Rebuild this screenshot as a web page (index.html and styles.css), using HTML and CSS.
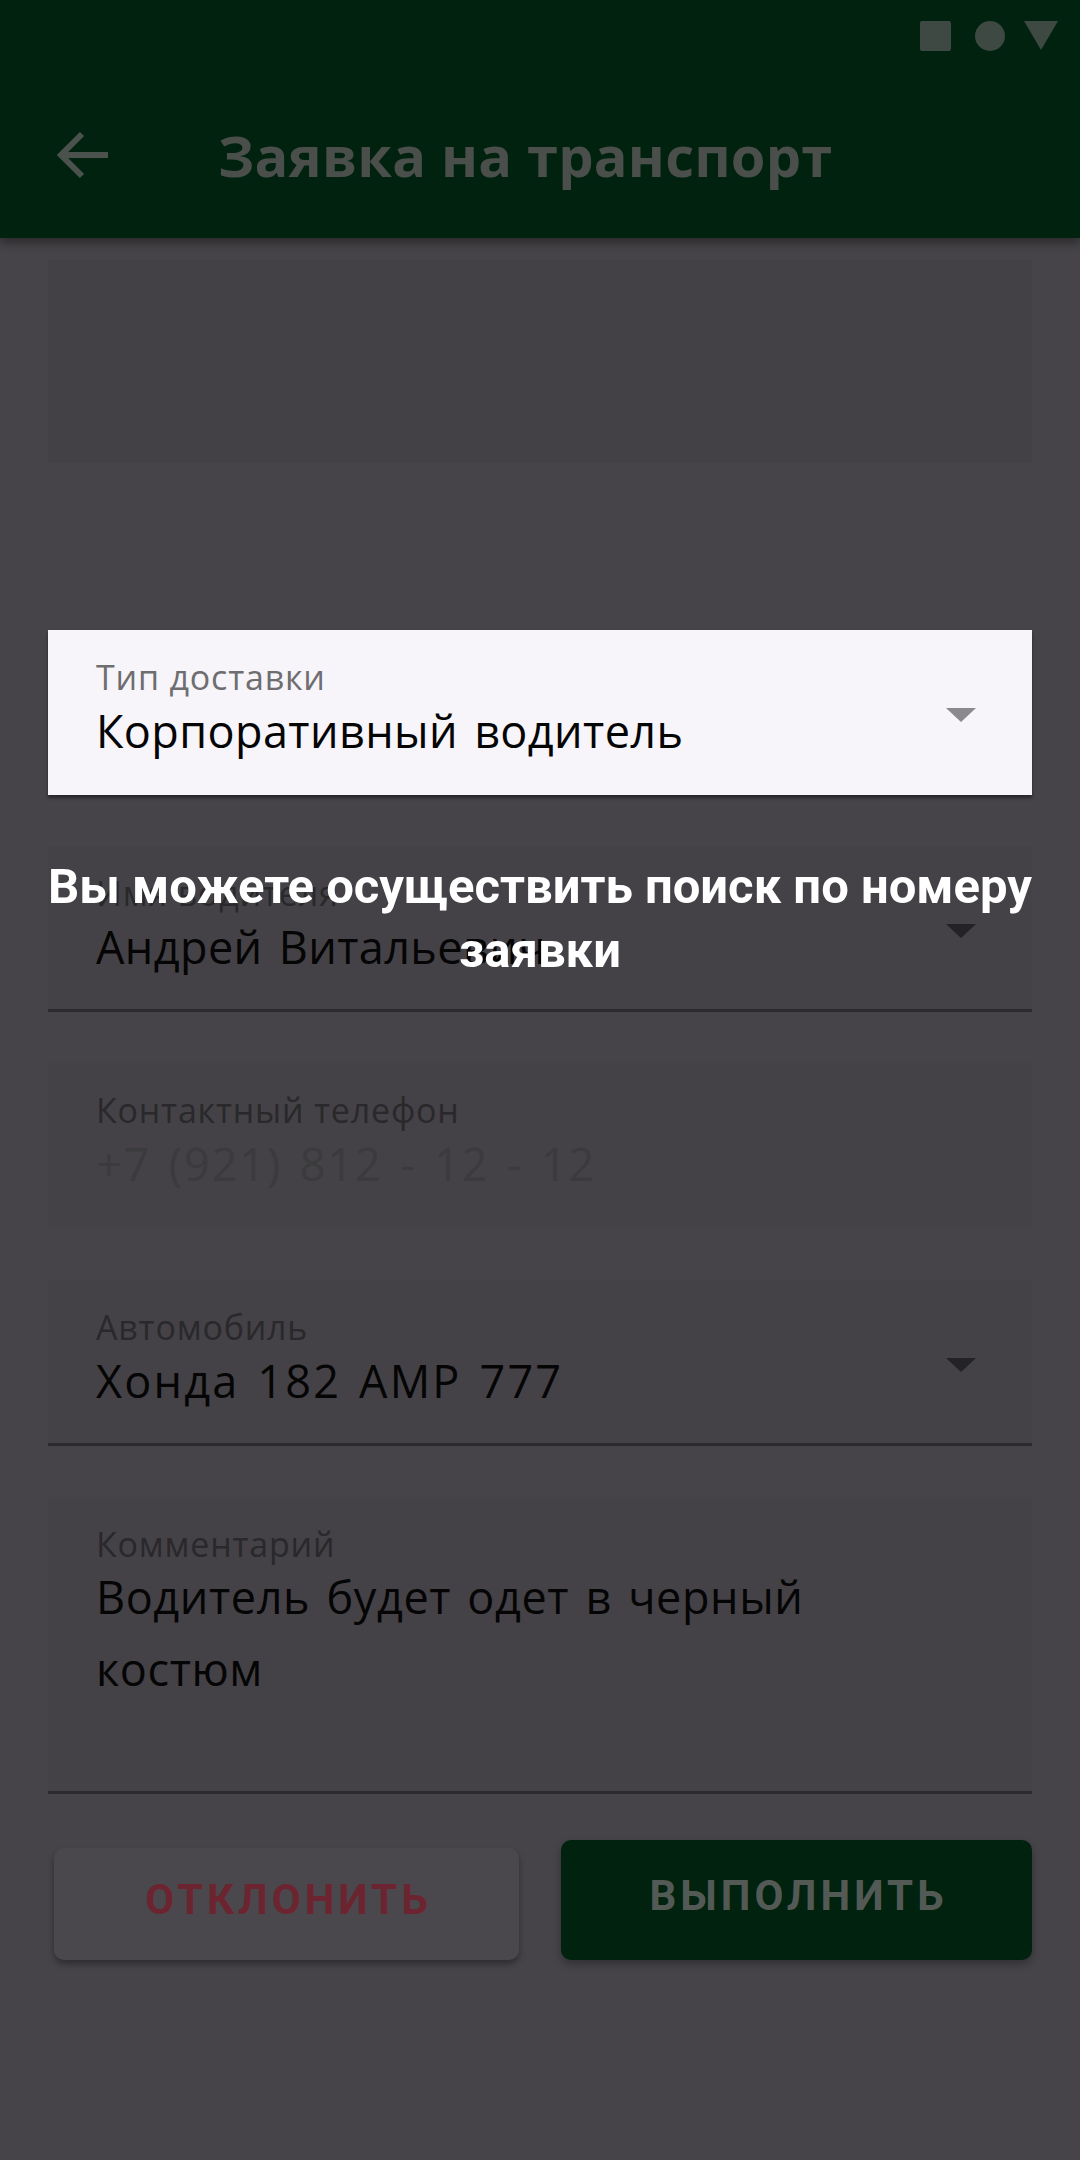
FILE: index.html
```html
<!DOCTYPE html>
<html lang="ru">
<head>
<meta charset="utf-8">
<title>Заявка на транспорт</title>
<link rel="stylesheet" href="styles.css">
</head>
<body>
<div class="screen">
  <header class="appbar">
    <div class="statusbar">
      <span class="sb-square"></span>
      <span class="sb-circle"></span>
      <svg class="sb-tri" width="34" height="30" viewBox="0 0 34 30"><polygon points="0,0 34,0 17,29" fill="#3d4942"/></svg>
    </div>
    <div class="toolbar">
      <svg class="back" width="60" height="60" viewBox="0 0 60 60"><path d="M55 30 H8 M29 9 L8 30 L29 51" fill="none" stroke="#4b524d" stroke-width="6" stroke-linecap="butt" stroke-linejoin="miter"/></svg>
      <h1 class="title">Заявка на транспорт</h1>
    </div>
  </header>

  <main class="content">
    <div class="dim-box"></div>

    <div class="field field-active">
      <div class="field-text">
        <div class="label">Тип доставки</div>
        <div class="value">Корпоративный водитель</div>
      </div>
      <span class="caret caret-light"></span>
    </div>

    <div class="field field-line">
      <div class="field-text">
        <div class="label">Имя водителя</div>
        <div class="value">Андрей Витальевич</div>
      </div>
      <span class="caret"></span>
    </div>

    <div class="field">
      <div class="field-text">
        <div class="label">Контактный телефон</div>
        <div class="value value-disabled value-wide">+7 (921) 812 - 12 - 12</div>
      </div>
    </div>

    <div class="field field-line">
      <div class="field-text">
        <div class="label">Автомобиль</div>
        <div class="value value-wide">Хонда 182 АМР 777</div>
      </div>
      <span class="caret"></span>
    </div>

    <div class="field field-line field-tall">
      <div class="field-text">
        <div class="label">Комментарий</div>
        <div class="value value-multi">Водитель будет одет в черный<br>костюм</div>
      </div>
    </div>

    <div class="actions">
      <button class="btn btn-reject">ОТКЛОНИТЬ</button>
      <button class="btn btn-done">ВЫПОЛНИТЬ</button>
    </div>
  </main>

  <div class="hint">Вы можете осуществить поиск по номеру<br>заявки</div>
</div>
</body>
</html>
```

FILE: styles.css
```css
html, body {
  margin: 0;
  padding: 0;
  background: #464448;
}

.screen {
  position: relative;
  width: 1080px;
  height: 2160px;
  overflow: hidden;
  background: #464448;
  font-family: "Open Sans", "Noto Sans", sans-serif;
}

.appbar {
  height: 238px;
  background: #01220f;
  box-shadow: 0 4px 10px rgba(0, 0, 0, 0.45);
  position: relative;
  z-index: 2;
}

.statusbar {
  height: 72px;
  display: flex;
  justify-content: flex-end;
  align-items: flex-start;
  padding: 21px 22px 0 0;
  box-sizing: border-box;
}

.sb-square {
  width: 31px;
  height: 30px;
  background: #3d4942;
  border-radius: 2px;
}

.sb-circle {
  width: 30px;
  height: 30px;
  margin-left: 24px;
  border-radius: 50%;
  background: #3d4942;
}

.sb-tri {
  margin-left: 19px;
  display: block;
}

.toolbar {
  height: 166px;
  display: flex;
  align-items: center;
  padding-left: 53px;
  box-sizing: border-box;
}

.back {
  display: block;
  flex: none;
}

.title {
  margin: 0 0 0 105px;
  font-family: "Open Sans", sans-serif;
  font-weight: 700;
  font-size: 56px;
  line-height: 70px;
  color: #4b4f4c;
  letter-spacing: 0.2px;
}

.content {
  padding: 0 48px;
  display: flex;
  flex-direction: column;
}

.dim-box {
  margin-top: 22px;
  height: 203px;
  background: #434145;
}

.field {
  position: relative;
  margin-top: 51px;
  height: 166px;
  box-sizing: border-box;
  padding: 28px 48px 0 48px;
  background: #444246;
  display: flex;
  justify-content: space-between;
  align-items: flex-start;
}

.field-active {
  margin-top: 167px;
  height: 165px;
  background: #f7f5f9;
  box-shadow: 0 3px 3px rgba(0, 0, 0, 0.45);
  z-index: 3;
}

.field-line {
  border-bottom: 3px solid #2b2a2d;
}

.field-tall {
  height: 297px;
}

.label {
  font-size: 34px;
  line-height: 38px;
  color: #29282b;
  letter-spacing: 0.8px;
}

.field-active .label {
  color: #6e6d70;
}

.value {
  margin-top: 8px;
  font-size: 45px;
  line-height: 54px;
  color: #050505;
  letter-spacing: 0.4px;
  word-spacing: 4px;
}

.value-wide {
  letter-spacing: 2.2px;
  word-spacing: 4px;
}

.value-disabled {
  color: #3b3a3d;
  letter-spacing: 1.9px;
}

.value-multi {
  line-height: 72px;
  margin-top: -2px;
  letter-spacing: 0.6px;
}

.caret {
  width: 0;
  height: 0;
  margin-top: 50px;
  margin-right: 8px;
  border-left: 15px solid transparent;
  border-right: 15px solid transparent;
  border-top: 14px solid #232225;
}

.caret-light {
  border-top-color: #8a898c;
}

.actions {
  margin-top: 46px;
  display: grid;
  grid-template-columns: 1fr 1fr;
  column-gap: 42px;
  align-items: end;
}

.btn {
  border: none;
  border-radius: 10px;
  font-family: "Roboto", sans-serif;
  font-weight: 700;
  font-size: 42px;
  line-height: 42px;
  letter-spacing: 4px;
  padding: 0 0 8px 4px;
}

.btn-reject {
  margin-left: 6px;
  height: 112px;
  background: #4a484c;
  color: #6c2530;
  box-shadow: 0 4px 6px rgba(0, 0, 0, 0.35);
}

.btn-done {
  height: 120px;
  background: #01220f;
  color: #535a55;
  box-shadow: 0 4px 8px rgba(0, 0, 0, 0.3);
}

.hint {
  position: absolute;
  left: 0;
  right: 0;
  top: 855px;
  z-index: 4;
  text-align: center;
  font-family: "Roboto", sans-serif;
  font-weight: 700;
  font-size: 49px;
  line-height: 64px;
  color: #ffffff;
}
```
